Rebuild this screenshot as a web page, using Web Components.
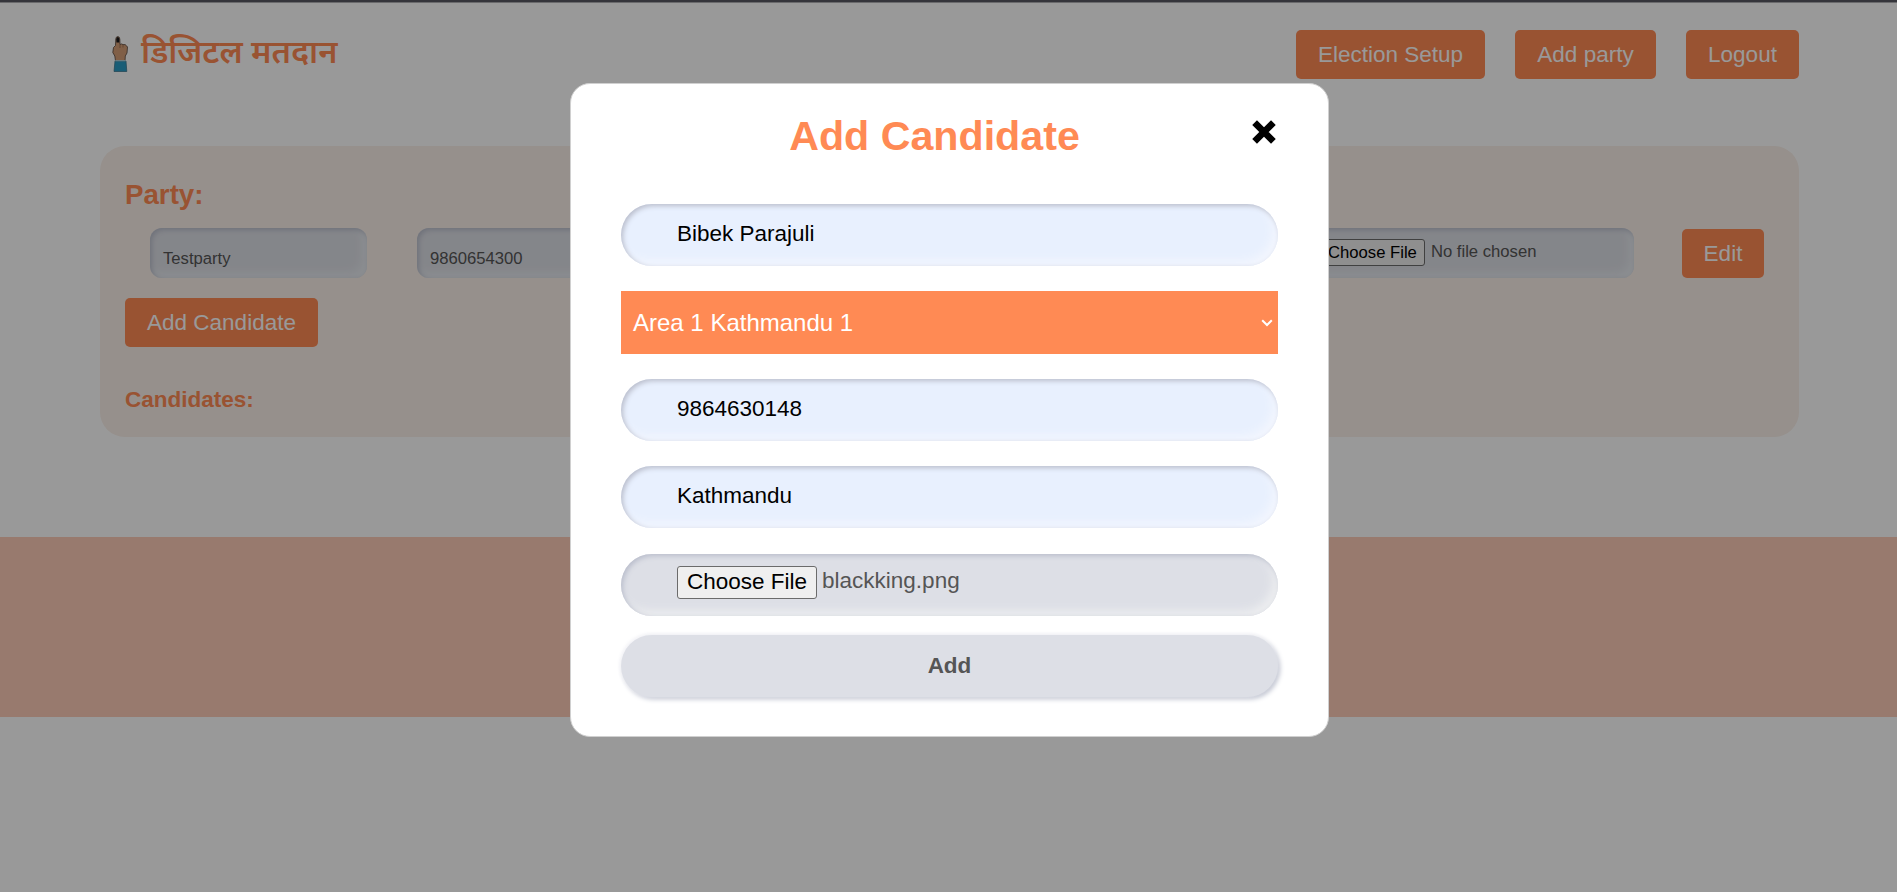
<!DOCTYPE html>
<html lang="en">
<head>
<meta charset="utf-8">
<title>Digital Matadan</title>
<style>
html,body{margin:0;height:100%;overflow:hidden;background:#fff;font-family:"Liberation Sans",Arial,sans-serif}
</style>
</head>
<body>
<voting-page></voting-page>
<script>
const define=(name,css,html)=>customElements.define(name,class extends HTMLElement{
  constructor(){
    super();
    const t=document.createElement('template');
    t.innerHTML=`<style>*{box-sizing:border-box}${css}</style>${html}`;
    this.attachShadow({mode:'open'}).append(t.content.cloneNode(true));
  }
});

define('orange-button',`
:host{display:inline-flex;align-items:center;justify-content:center;box-sizing:border-box;height:49px;width:var(--w);flex:none;border-radius:5px;background:#ff8a54;color:#fff;font-size:22.5px;line-height:26px;padding-top:1px;white-space:nowrap}
`,`<slot></slot>`);

define('finger-logo',`:host{display:block;width:17px;height:37px}svg{display:block}`,`
<svg width="17" height="37" viewBox="0 0 17 37">
<path d="M3.500 25 2.800 20 .8 16.500 1.500 11.500 3.500 9.500 3.800 3Q4 .5 5.800.5T7.800 3L8 8.500Q9.500 7.300 11 8.600 13.500 8 14.500 9.800L15.500 11 15 17 13.300 20 13 25Z" fill="#d69f77" stroke="#54443b" stroke-width=".8"/>
<path d="M8 8.500V12M11 8.700V11.500" stroke="#8a6248" stroke-width=".7"/>
<path d="M4.200 3Q5.800-.8 7.400 3L7.200 6.500H4.500Z" fill="#19191d"/>
<path d="M3 25h11l.8 10.500H2Z" fill="#2b9cc5" stroke="#356e86" stroke-width=".7"/>
<path d="M3.200 24.700h10.600" stroke="#b9d9e2" stroke-width="1.200"/>
</svg>`);

define('site-header',`
:host{display:flex;align-items:flex-start;justify-content:space-between;height:146px;padding:30px 98px 0 112px;border-top:0}
.brand{display:flex;align-items:flex-start;padding-top:6px;gap:13px}
.name{font:600 32.5px/36px "Noto Sans","Noto Sans Devanagari",sans-serif;color:#ff8a54;white-space:nowrap;margin:-3px 0 0 -1px}
nav{display:flex;gap:30px}
`,`<div class="brand"><finger-logo></finger-logo><span class="name">डिजिटल मतदान</span></div>
<nav><orange-button style="--w:189px">Election Setup</orange-button><orange-button style="--w:141px">Add party</orange-button><orange-button style="--w:113px">Logout</orange-button></nav>`);

define('small-field',`
:host{display:block;box-sizing:border-box;width:217px;height:50px;border-radius:12px;background:#dddfe6;box-shadow:inset 2px 2px 5px #babecc,inset -5px -5px 10px #e9edf2;padding:21px 13px 0;font-size:16.67px;line-height:19px;color:#555;white-space:nowrap;overflow:hidden}
:host([file]){width:326px;padding:11px 12px 0}
`,`<slot></slot>`);

define('file-picker',`
:host{display:flex;align-items:flex-start;color:#555;white-space:nowrap}
.b{background:#efefef;color:#000;border:1px solid #6b6b6b;border-radius:3px;padding:var(--p);margin-right:var(--g)}
.t{margin-top:var(--t)}
`,`<span class="b">Choose File</span><span class="t"><slot></slot></span>`);

define('party-card',`
:host{display:block;box-sizing:border-box;width:1699px;height:291px;margin-left:100px;border-radius:25px;background:#faf0e9;padding:32px 35px 0 25px}
h2,h3{margin:0;color:#ff8a54;white-space:nowrap}
h2{font-size:27.7px;line-height:34px}
h3{font-size:22.5px;line-height:28px;margin-top:38.6px}
.row{display:flex;align-items:flex-start;gap:50px;padding:16px 0 0 25px;height:86px}
orange-button.edit{margin:1px 0 0 -2px}
small-field[file]{margin-left:-177px}
file-picker{--p:3px 7px;--g:6px;--t:3px}
`,`<h2>Party:</h2>
<div class="row"><small-field>Testparty</small-field><small-field>9860654300</small-field><small-field></small-field><small-field></small-field><small-field style="visibility:hidden"></small-field><small-field file><file-picker>No file chosen</file-picker></small-field><orange-button class="edit" style="--w:82px">Edit</orange-button></div>
<orange-button style="--w:193px">Add Candidate</orange-button>
<h3>Candidates:</h3>`);

define('page-footer',`:host{display:block;margin-top:100px;height:180px;background:#fdcbb7}`,``);

define('pill-field',`
:host{display:flex;box-sizing:border-box;width:657px;height:62px;border-radius:31px;background:#e8f0fe;box-shadow:inset 2px 2px 5px #babecc,inset -5px -5px 10px #f3f6fe;padding:17px 56px 0;font-size:22.5px;line-height:26px;color:#000;white-space:nowrap}
:host([file]){background:#dddfe6;box-shadow:inset 2px 2px 5px #babecc,inset -5px -5px 10px #edeef0;padding-top:12px}
`,`<slot></slot>`);

define('area-select',`
:host{display:flex;align-items:center;justify-content:space-between;box-sizing:border-box;height:63px;background:#ff8a54;color:#fff;padding:0 5px 0 12px;font-size:24px;line-height:28px;white-space:nowrap}
`,`<slot></slot><svg width="12" height="8" viewBox="0 0 12 8"><path d="M1.200 1.200 6 6l4.800-4.800" fill="none" stroke="#fff" stroke-width="2"/></svg>`);

define('candidate-dialog',`
:host{display:block;box-sizing:border-box;width:759px;height:654px;background:#fff;border:1px solid #d0d0d0;border-radius:20px;padding:0 50px}
header{display:grid;grid-template-columns:1fr 24px;height:120px;padding:28px 2px 0 0}
h1{margin:0 4px 0 0;text-align:center;font-size:41.2px;line-height:48px;color:#ff8a54;white-space:nowrap}
svg{display:block;margin-top:8px}
form{display:flex;flex-direction:column;gap:25.1px}
.add{display:flex;align-items:center;justify-content:center;height:62px;border-radius:31px;background:#dddfe6;box-shadow:-1px -1px 4px #f2f2f6,2px 2px 5px #babecc;font-weight:700;font-size:22.5px;line-height:26px;color:#555;margin-top:-6px;padding-bottom:1px}
pill-field[file]{margin-top:.6px}
file-picker{--p:2px 9px 3px;--g:5px;--t:2px}
`,`<header><h1>Add Candidate</h1><svg width="24" height="24" viewBox="0 0 23 23"><path d="M2.500 2.500l18 18M20.500 2.500l-18 18" stroke="#000" stroke-width="6.400"/></svg></header>
<form><pill-field>Bibek Parajuli</pill-field><area-select>Area 1 Kathmandu 1</area-select><pill-field>9864630148</pill-field><pill-field>Kathmandu</pill-field><pill-field file><file-picker>blackking.png</file-picker></pill-field><div class="add">Add</div></form>`);

define('modal-overlay',`
:host{position:absolute;inset:0;display:flex;justify-content:center;align-items:flex-start;padding:83px 0 0 2px;box-sizing:border-box;background:rgba(0,0,0,.4);border-top:0}
`,`<slot></slot>`);

define('voting-page',`
:host{display:block;position:relative;height:892px;overflow:hidden}
.edge{position:absolute;top:0;left:0;right:0;height:3px;background:linear-gradient(#35353b 0 2px,#6a6a6c 2px)}
`,`<site-header></site-header><party-card></party-card><page-footer></page-footer>
<modal-overlay><candidate-dialog></candidate-dialog></modal-overlay><div class="edge"></div>`);
</script>
</body>
</html>
